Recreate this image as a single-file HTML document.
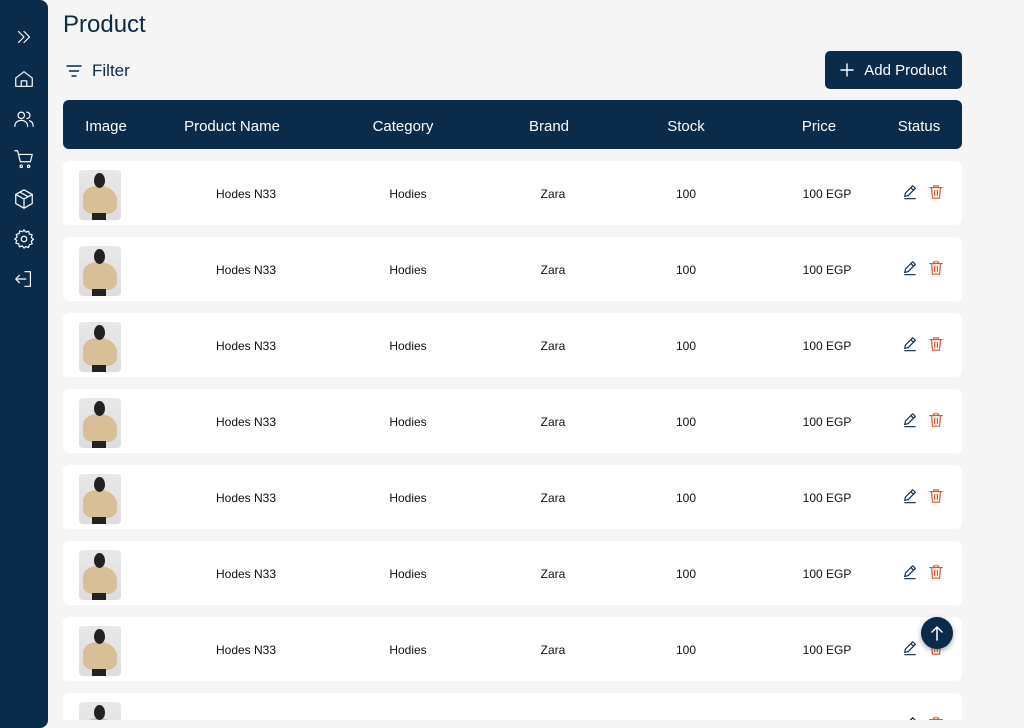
<!DOCTYPE html>
<html><head><style>
*{margin:0;padding:0;box-sizing:border-box}
html,body{width:1024px;height:728px;overflow:hidden}
body{background:#f5f5f5;font-family:"Liberation Sans",sans-serif;position:relative;color:#0b2b4a}
.side{position:absolute;left:0;top:0;width:48px;height:728px;background:#0b2b4a;border-radius:0 8px 8px 0;z-index:2}
.side svg{position:absolute;left:13px;width:22px;height:22px;fill:none;stroke:#fff;stroke-width:1.3;stroke-linecap:round;stroke-linejoin:round}
h1{position:absolute;left:63px;top:11px;font-size:24px;font-weight:normal;color:#0b2b4a}
.filter{position:absolute;left:66px;top:61px;font-size:17px;display:flex;align-items:center;gap:10px}
.add{position:absolute;left:825px;top:51px;width:137px;height:38px;background:#0b2b4a;border-radius:5px;color:#fff;font-size:15px;display:flex;align-items:center;justify-content:center;gap:10px}
.head{position:absolute;left:63px;top:100px;width:899px;height:49px;background:#0b2b4a;border-radius:6px;color:#fff;font-size:15px}
.c{position:absolute;transform:translateX(-50%);white-space:nowrap}
.head .c{top:18px}
.clip{position:absolute;left:0;top:0;width:1024px;height:720px;overflow:hidden}
.row{position:absolute;left:63px;width:899px;height:64px;background:#fff;border-radius:6px;font-size:12px;color:#111}
.row .c{top:26px}
.img{position:absolute;left:16px;top:9px;width:42px;height:50px;border-radius:4px;background:linear-gradient(#e8e8e8,#ddd);overflow:hidden}
.img i{position:absolute;left:4px;top:16px;width:34px;height:28px;background:#d9bf98;border-radius:40% 50% 30% 30%}
.img b{position:absolute;left:15px;top:3px;width:11px;height:15px;background:#222;border-radius:50%}
.img u{position:absolute;left:13px;top:43px;width:14px;height:7px;background:#222}
.ic{position:absolute;top:23px;width:16px;height:16px;fill:none;stroke-width:1.3;stroke-linecap:round;stroke-linejoin:round}
.up{position:absolute;left:921px;top:617px;width:32px;height:32px;border-radius:50%;background:#0b2b4a;box-shadow:0 2px 6px rgba(0,0,0,.35);z-index:3}
</style></head><body>
<div class="side">
<svg style="top:26px" viewBox="0 0 24 24"><path d="M6 6l6 6-6 6M12 6l6 6-6 6"/></svg>
<svg style="top:68px" viewBox="0 0 24 24"><path d="M3 11l9-7 9 7v9H3z"/><path d="M9 20v-6h6v6"/></svg>
<svg style="top:108px" viewBox="0 0 24 24"><circle cx="9" cy="8" r="3.5"/><path d="M2 20c0-4 3-6.5 7-6.5s7 2.5 7 6.5"/><path d="M15 4.5a3.5 3.5 0 010 7M18 13.8c2.5.8 4 3 4 6.2"/></svg>
<svg style="top:148px" viewBox="0 0 24 24"><path d="M2 3h3l3 12h11l2-8H6"/><circle cx="9" cy="20" r="1.3"/><circle cx="17" cy="20" r="1.3"/></svg>
<svg style="top:188px" viewBox="0 0 24 24"><path d="M12 2l9 5v10l-9 5-9-5V7z"/><path d="M3 7l9 5 9-5M12 12v10M7.5 4.5l9 5"/></svg>
<svg style="top:228px" viewBox="0 0 24 24"><circle cx="12" cy="12" r="3"/><path d="M12 2l2 2.5 3-1 .8 3.1 3.1.8-1 3 2.5 2-2.5 2 1 3-3.1.8-.8 3.1-3-1L12 22l-2-2.5-3 1-.8-3.1-3.1-.8 1-3L2 12l2.5-2-1-3 3.1-.8.8-3.1 3 1z"/></svg>
<svg style="top:268px" viewBox="0 0 24 24"><path d="M13 4h6v16h-6M3 12h11M7 8l-4 4 4 4"/></svg>
</div>
<h1>Product</h1>
<div class="filter"><svg width="16" height="14" viewBox="0 0 16 14" fill="none" stroke="#0b2b4a" stroke-width="1.4" stroke-linecap="round"><path d="M1 2h14M3.5 7h9M6 12h4"/></svg>Filter</div>
<div class="add"><svg width="14" height="14" viewBox="0 0 14 14" stroke="#fff" stroke-width="1.4" stroke-linecap="round"><path d="M7 1v12M1 7h12"/></svg>Add Product</div>
<div class="head"><span class="c" style="left:43px">Image</span><span class="c" style="left:169px">Product Name</span><span class="c" style="left:340px">Category</span><span class="c" style="left:486px">Brand</span><span class="c" style="left:623px">Stock</span><span class="c" style="left:756px">Price</span><span class="c" style="left:856px">Status</span></div>
<div class="clip" id="rows"></div>
<script>
var h='';for(var i=0;i<8;i++){h+='<div class="row" style="top:'+(161+76*i)+'px"><div class="img"><i></i><b></b><u></u></div><span class="c" style="left:183px">Hodes N33</span><span class="c" style="left:345px">Hodies</span><span class="c" style="left:490px">Zara</span><span class="c" style="left:623px">100</span><span class="c" style="left:764px">100 EGP</span><svg class="ic" style="left:839px" viewBox="0 0 18 18" stroke="#0b2b4a"><path d="M3 14l1-4 8-8 3 3-8 8zM10 4l3 3M3 16.5h12"/></svg><svg class="ic" style="left:865px" viewBox="0 0 18 18" stroke="#e0502a"><path d="M2 4h14M6.5 4V2h5v2M4 4l1 12h8l1-12M7.5 7v6M10.5 7v6"/></svg></div>';}
document.getElementById('rows').innerHTML=h;
</script>
<div class="up"><svg width="32" height="32" viewBox="0 0 32 32" fill="none" stroke="#fff" stroke-width="1.5" stroke-linecap="round"><path d="M16 23V10M11 15l5-5 5 5"/></svg></div>
</body></html>
